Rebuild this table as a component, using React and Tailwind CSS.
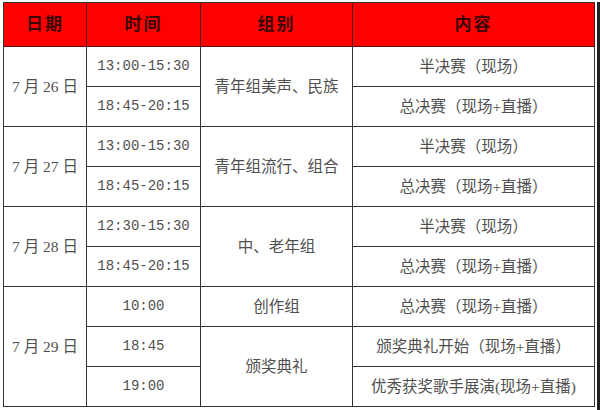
import React from "react";

const cjk = "font-['Liberation_Serif','Noto_Sans_CJK_SC',serif]";
const cell =
  "flex items-center justify-center border-r border-b border-[#333] text-[15.5px] text-[#505050] " +
  cjk;
const timeCell =
  "flex items-center justify-center border-r border-b border-[#333] text-[14px] text-[#505050] font-['Liberation_Mono',monospace]";
const head =
  "flex items-center justify-center border-r border-b border-[#5a1010] bg-[#ff0000] text-[17px] font-bold tracking-[2px] text-[#3a0505] " +
  cjk;

export default function App() {
  return (
    <div className="flex h-[410px] w-[600px] bg-white pl-[3px] pt-[2px]">
      <div className="grid h-[405px] grid-cols-[83px_114px_152px_242px] grid-rows-[44px_repeat(9,40px)] border-l border-t border-[#333]">
        <div className={head}>日期</div>
        <div className={head}>时间</div>
        <div className={head}>组别</div>
        <div className={head}>内容</div>

        <div className={cell + " row-span-2"}>7 月 26 日</div>
        <div className={timeCell}>13:00-15:30</div>
        <div className={cell + " row-span-2"}>青年组美声、民族</div>
        <div className={cell}>半决赛（现场）</div>
        <div className={timeCell}>18:45-20:15</div>
        <div className={cell}>总决赛（现场+直播）</div>

        <div className={cell + " row-span-2"}>7 月 27 日</div>
        <div className={timeCell}>13:00-15:30</div>
        <div className={cell + " row-span-2"}>青年组流行、组合</div>
        <div className={cell}>半决赛（现场）</div>
        <div className={timeCell}>18:45-20:15</div>
        <div className={cell}>总决赛（现场+直播）</div>

        <div className={cell + " row-span-2"}>7 月 28 日</div>
        <div className={timeCell}>12:30-15:30</div>
        <div className={cell + " row-span-2"}>中、老年组</div>
        <div className={cell}>半决赛（现场）</div>
        <div className={timeCell}>18:45-20:15</div>
        <div className={cell}>总决赛（现场+直播）</div>

        <div className={cell + " row-span-3"}>7 月 29 日</div>
        <div className={timeCell}>10:00</div>
        <div className={cell}>创作组</div>
        <div className={cell}>总决赛（现场+直播）</div>
        <div className={timeCell}>18:45</div>
        <div className={cell + " row-span-2"}>颁奖典礼</div>
        <div className={cell}>颁奖典礼开始（现场+直播）</div>
        <div className={timeCell}>19:00</div>
        <div className={cell}>优秀获奖歌手展演(现场+直播)</div>
      </div>
      <div className="ml-[2px] h-full w-[3px] bg-[#222]" />
    </div>
  );
}
